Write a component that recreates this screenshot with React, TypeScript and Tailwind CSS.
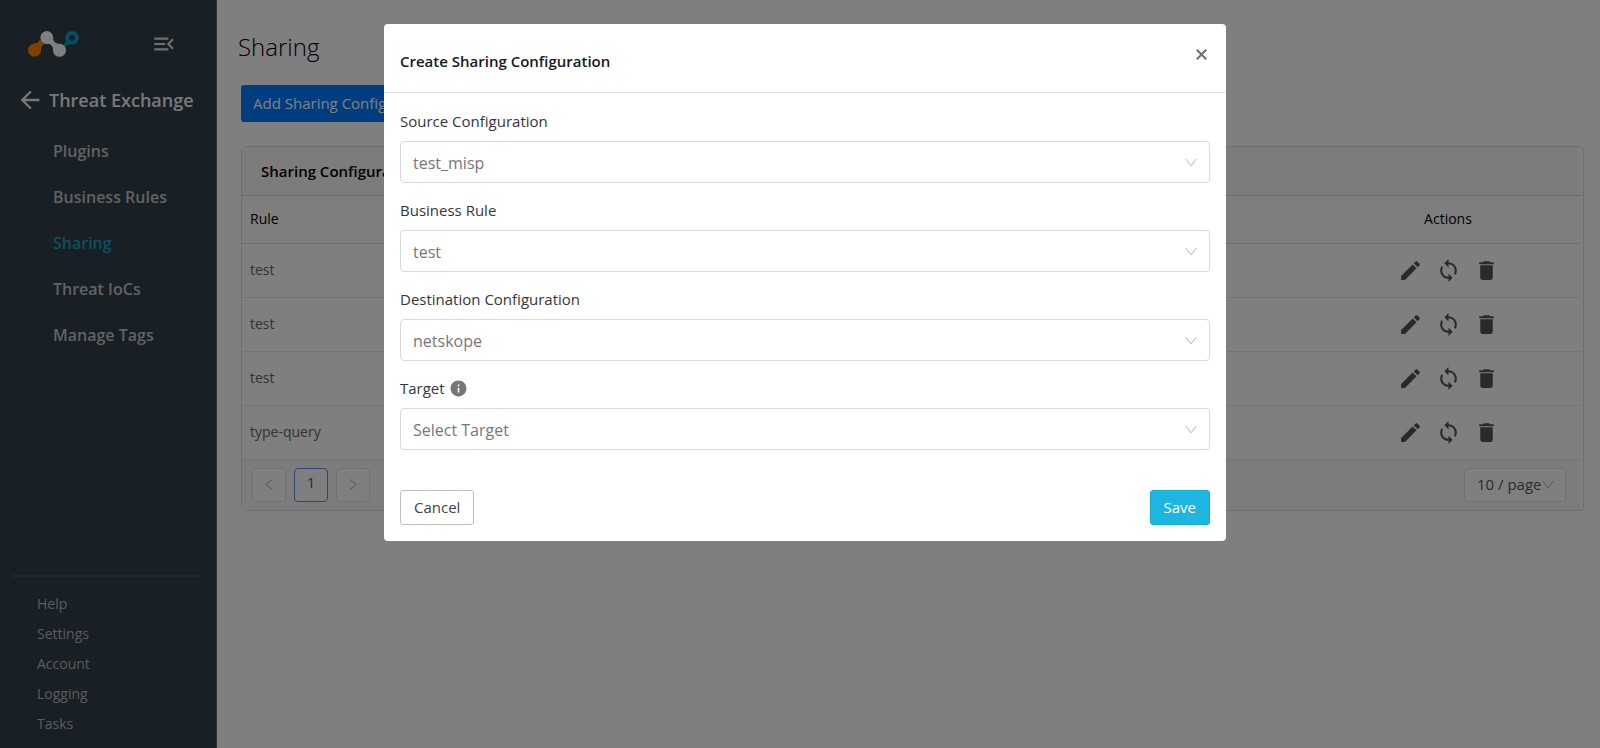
import { MdArrowBack, MdDelete, MdEdit, MdInfo, MdMenuOpen, MdSync } from "react-icons/md";

const NAV_ITEMS = ["Plugins", "Business Rules", "Sharing", "Threat IoCs", "Manage Tags"];
const FOOTER_ITEMS = ["Help", "Settings", "Account", "Logging", "Tasks"];
const RULES = ["test", "test", "test", "type-query"];

function Logo() {
  return (
    <svg viewBox="0 0 51 26" className="h-[26px] w-[51px]" aria-hidden="true">
      <path d="M5 12.800Q11 12.500 12 8.500l4.500 4Q12.500 15 12.900 20Z" fill="#ff8300" />
      <circle cx="6.500" cy="19.200" r="6.500" fill="#ff8300" />
      <path d="M34 14.500Q38.500 12 38 8L43 13.300Q39 13 36.500 17.500Z" fill="#00a3c7" />
      <circle cx="44" cy="6.800" r="4.900" fill="none" stroke="#00a3c7" strokeWidth="3.700" />
      <path d="M25 5.500Q24.400 12.800 32.500 13L25 20Q25.600 13 18.500 12.600Z" fill="#fff" />
      <circle cx="18.800" cy="6.500" r="6.400" fill="#fff" />
      <circle cx="31.500" cy="19.300" r="6.500" fill="#fff" />
    </svg>
  );
}

function Chevron({ className = "" }: { className?: string }) {
  return (
    <svg viewBox="0 0 12 9" fill="none" stroke="currentColor" className={`h-[9px] w-3 ${className}`} aria-hidden="true">
      <path d="M.7 1 6 7.800 11.300 1" />
    </svg>
  );
}

function Sidebar() {
  return (
    <aside className="flex w-[217px] shrink-0 flex-col border-r border-[#5c6166] bg-[#303e4a] text-[#dcdcdc]">
      <div className="flex items-center justify-between pt-[31px] pr-[39px] pl-7">
        <Logo />
        <button type="button" aria-label="Collapse menu" className="text-[#e0e0e0]">
          <MdMenuOpen size={26} />
        </button>
      </div>
      <a href="#back" className="mt-[29px] flex items-center gap-[5px] pl-4 text-lg leading-7 font-semibold text-[#f2f2f2]">
        <MdArrowBack size={28} />
        <span className="whitespace-nowrap">Threat Exchange</span>
      </a>
      <nav className="mt-[25px] flex flex-col gap-[22px] pl-[53px] text-base leading-6 font-semibold">
        {NAV_ITEMS.map((item) => (
          <a key={item} href="#nav" className={item === "Sharing" ? "text-[#1d9fbe]" : "text-[#c4c4c4]"}>
            {item}
          </a>
        ))}
      </nav>
      <div className="mt-auto mr-4 ml-3 flex flex-col gap-2 border-t-2 border-[#4a4f53] pt-4 pb-[13px] pl-[25px] text-sm leading-[22px] text-[#b8b8b8]">
        {FOOTER_ITEMS.map((item) => (
          <a key={item} href="#footer">
            {item}
          </a>
        ))}
      </div>
    </aside>
  );
}

function RulesTable() {
  return (
    <section className="mt-6 ml-[3px] rounded border border-[#dedede] pr-0.5">
      <h2 className="border-b border-[#d8d8d8] bg-[#f8f8f8] py-3 pl-[19px] text-[15px] leading-6 font-semibold">
        Sharing Configurations
      </h2>
      <table className="w-full table-fixed text-left text-sm">
        <thead>
          <tr className="h-[47px] border-b border-[#dedede] bg-[#fcfcfc]">
            <th className="pl-2 font-medium">Rule</th>
            <th className="w-[266px] text-center font-medium">Actions</th>
          </tr>
        </thead>
        <tbody>
          {RULES.map((rule, i) => (
            <tr key={i} className="h-[54px] border-b border-[#e6e6e6]">
              <td className="pl-2 text-[#666]">{rule}</td>
              <td>
                <div className="flex justify-center gap-[13px] text-[#555]">
                  <button type="button" aria-label="Edit">
                    <MdEdit size={25} />
                  </button>
                  <button type="button" aria-label="Sync">
                    <MdSync size={25} />
                  </button>
                  <button type="button" aria-label="Delete">
                    <MdDelete size={25} />
                  </button>
                </div>
              </td>
            </tr>
          ))}
        </tbody>
      </table>
      <div className="flex items-center gap-2 bg-[#f8f8f8] py-2 pr-[15px] pl-2.5 text-[15px] text-[#595959]">
        <button type="button" aria-label="Previous page" className="flex size-[34px] items-center justify-center rounded border border-[#e2e2e2] bg-white text-[#aaa]">
          <Chevron className="rotate-90" />
        </button>
        <button type="button" className="size-[34px] rounded border border-[#5590e8] bg-white pb-1">
          1
        </button>
        <button type="button" aria-label="Next page" className="flex size-[34px] items-center justify-center rounded border border-[#e2e2e2] bg-white text-[#aaa]">
          <Chevron className="-rotate-90" />
        </button>
        <div className="relative ml-auto w-[102px]">
          <select aria-label="Rows per page" className="h-[34px] w-full appearance-none rounded border border-[#e2e2e2] bg-white pl-3">
            <option>10 / page</option>
          </select>
          <Chevron className="pointer-events-none absolute top-3 right-3 text-[#aaa]" />
        </div>
      </div>
    </section>
  );
}

function SelectField({ id, label, value, info = false }: { id: string; label: string; value: string; info?: boolean }) {
  return (
    <div>
      <div className="flex items-center gap-1">
        <label htmlFor={id} className="text-[15px] leading-[22px] text-[#33373b]">
          {label}
        </label>
        {info && <MdInfo size={19} className="text-[#777]" />}
      </div>
      <div className="relative mt-[9px]">
        <select id={id} className="h-[42px] w-full appearance-none rounded border border-[#d9d9d9] bg-white pt-px pl-3 text-base text-[#777]">
          <option>{value}</option>
        </select>
        <Chevron className="pointer-events-none absolute top-[17px] right-[13px] text-[#b5b5b5]" />
      </div>
    </div>
  );
}

function SharingDialog() {
  return (
    <div className="fixed inset-0 flex items-start justify-center bg-black/50 pt-6 pl-2.5">
      <div role="dialog" aria-labelledby="dialog-title" className="w-[842px] max-w-full rounded bg-white">
        <header className="flex justify-between border-b border-[#dee2e6] px-4 pt-[25px] pb-[19px]">
          <h2 id="dialog-title" className="text-[15px] leading-6 font-semibold text-[#15191d]">
            Create Sharing Configuration
          </h2>
          <button type="button" aria-label="Close" className="-mt-[3px] mr-px flex size-4 items-center justify-center text-[#707070]">
            <svg viewBox="0 0 11 11" className="size-[11px]" fill="none" stroke="currentColor" strokeWidth="2" aria-hidden="true">
              <path d="M.8.8 10.200 10.200M10.200.8.8 10.200" />
            </svg>
          </button>
        </header>
        <form className="px-4 pt-[17px] pb-4" onSubmit={(e) => e.preventDefault()}>
          <div className="flex flex-col gap-4">
            <SelectField id="source" label="Source Configuration" value="test_misp" />
            <SelectField id="rule" label="Business Rule" value="test" />
            <SelectField id="destination" label="Destination Configuration" value="netskope" />
            <SelectField id="target" label="Target" value="Select Target" info />
          </div>
          <div className="mt-10 flex justify-between text-[15px]">
            <button type="button" className="h-[35px] rounded-[3px] border border-[#bfbfbf] px-[13px] text-[#444]">
              Cancel
            </button>
            <button type="submit" className="h-[35px] rounded-[3px] border border-[#14aedb] bg-[#1cb6e0] px-[13px] text-white">
              Save
            </button>
          </div>
        </form>
      </div>
    </div>
  );
}

export default function App() {
  return (
    <div className="flex min-h-screen bg-white font-['Open_Sans',sans-serif] text-black">
      <Sidebar />
      <main className="flex-1 pt-[29px] pr-4 pl-[21px]">
        <h1 className="text-2xl leading-9 font-light">Sharing</h1>
        <button type="button" className="mt-5 ml-[3px] h-[37px] rounded-[3px] bg-[#007bff] px-3 text-[15px] text-white">
          Add Sharing Configuration
        </button>
        <RulesTable />
      </main>
      <SharingDialog />
    </div>
  );
}
